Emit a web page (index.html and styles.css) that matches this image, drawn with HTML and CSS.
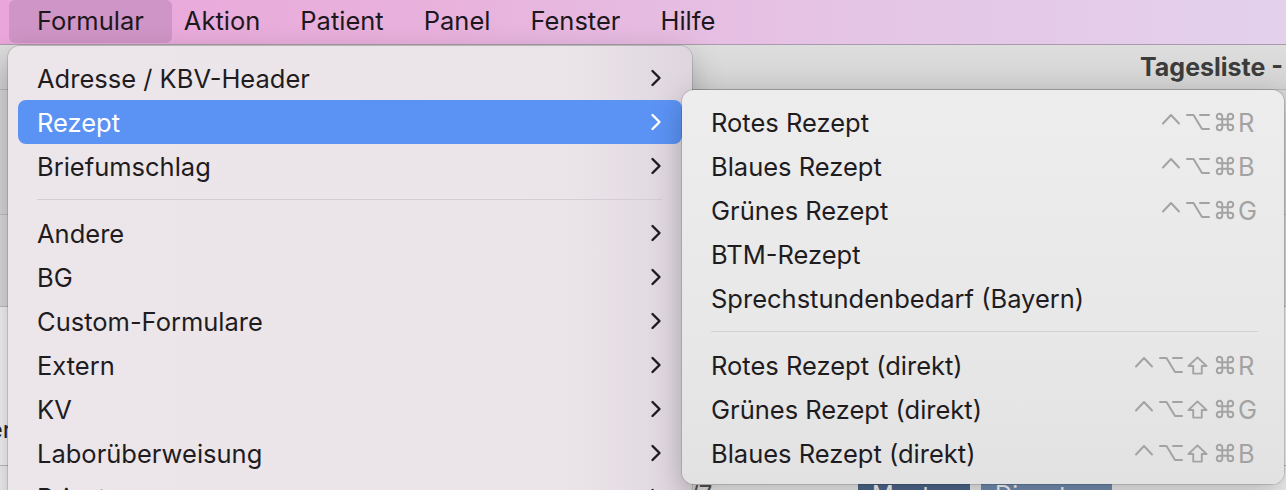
FILE: index.html
```html
<!DOCTYPE html>
<html lang="de">
<head>
    <meta charset="UTF-8">
    <title>Formular</title>
    <link rel="stylesheet" href="styles.css">
</head>
<body>
<div class="screen">
    <header class="menubar">
        <span class="menubar-item is-open">Formular</span>
        <span class="menubar-item">Aktion</span>
        <span class="menubar-item">Patient</span>
        <span class="menubar-item">Panel</span>
        <span class="menubar-item">Fenster</span>
        <span class="menubar-item">Hilfe</span>
    </header>

    <div class="window">
        <div class="titlebar">Tagesliste - Montag</div>
        <div class="window-body">
            <div class="pane pane-dark"></div>
            <div class="pane pane-mid"></div>
            <div class="pane pane-light"><span class="pane-text">Termine er</span></div>
            <div class="pane pane-foot"></div>
            <div class="daybar">
                <span class="daybar-count">/7</span>
                <span class="day-tab day-tab-dark">Montag</span>
                <span class="day-tab day-tab-light">Dienstag</span>
            </div>
        </div>
    </div>

    <!-- Formular menu -->
    <div class="menu menu-main">
        <div class="menu-row"><span>Adresse / KBV-Header</span><svg class="chevron" viewBox="0 0 12 20"><path d="M2.5 3 L9.5 10 L2.5 17"/></svg></div>
        <div class="menu-row is-active"><span>Rezept</span><svg class="chevron" viewBox="0 0 12 20"><path d="M2.5 3 L9.5 10 L2.5 17"/></svg></div>
        <div class="menu-row"><span>Briefumschlag</span><svg class="chevron" viewBox="0 0 12 20"><path d="M2.5 3 L9.5 10 L2.5 17"/></svg></div>
        <div class="menu-sep"></div>
        <div class="menu-row"><span>Andere</span><svg class="chevron" viewBox="0 0 12 20"><path d="M2.5 3 L9.5 10 L2.5 17"/></svg></div>
        <div class="menu-row"><span>BG</span><svg class="chevron" viewBox="0 0 12 20"><path d="M2.5 3 L9.5 10 L2.5 17"/></svg></div>
        <div class="menu-row"><span>Custom-Formulare</span><svg class="chevron" viewBox="0 0 12 20"><path d="M2.5 3 L9.5 10 L2.5 17"/></svg></div>
        <div class="menu-row"><span>Extern</span><svg class="chevron" viewBox="0 0 12 20"><path d="M2.5 3 L9.5 10 L2.5 17"/></svg></div>
        <div class="menu-row"><span>KV</span><svg class="chevron" viewBox="0 0 12 20"><path d="M2.5 3 L9.5 10 L2.5 17"/></svg></div>
        <div class="menu-row"><span>Laborüberweisung</span><svg class="chevron" viewBox="0 0 12 20"><path d="M2.5 3 L9.5 10 L2.5 17"/></svg></div>
        <div class="menu-row"><span>Privat</span><svg class="chevron" viewBox="0 0 12 20"><path d="M2.5 3 L9.5 10 L2.5 17"/></svg></div>
    </div>

    <!-- Rezept submenu -->
    <div class="menu menu-sub">
        <div class="menu-row"><span>Rotes Rezept</span>
            <span class="shortcut">
                <span class="key"><svg class="key-ctrl" viewBox="0 0 20 12"><path d="M2 10.5 L10 2 L18 10.5"/></svg></span>
                <span class="key"><svg class="key-opt" viewBox="0 0 24 18"><path d="M1 2 H7.5 L16 16 H23 M14 2 H23"/></svg></span>
                <span class="key"><svg class="key-cmd" viewBox="0 0 24 24"><path d="M18 3a3 3 0 0 0-3 3v12a3 3 0 0 0 3 3 3 3 0 0 0 3-3 3 3 0 0 0-3-3H6a3 3 0 0 0-3 3 3 3 0 0 0 3 3 3 3 0 0 0 3-3V6a3 3 0 0 0-3-3 3 3 0 0 0-3 3 3 3 0 0 0 3 3h12a3 3 0 0 0 3-3 3 3 0 0 0-3-3z"/></svg></span>
                <span class="key-letter">R</span>
            </span></div>
        <div class="menu-row"><span>Blaues Rezept</span>
            <span class="shortcut">
                <span class="key"><svg class="key-ctrl" viewBox="0 0 20 12"><path d="M2 10.5 L10 2 L18 10.5"/></svg></span>
                <span class="key"><svg class="key-opt" viewBox="0 0 24 18"><path d="M1 2 H7.5 L16 16 H23 M14 2 H23"/></svg></span>
                <span class="key"><svg class="key-cmd" viewBox="0 0 24 24"><path d="M18 3a3 3 0 0 0-3 3v12a3 3 0 0 0 3 3 3 3 0 0 0 3-3 3 3 0 0 0-3-3H6a3 3 0 0 0-3 3 3 3 0 0 0 3 3 3 3 0 0 0 3-3V6a3 3 0 0 0-3-3 3 3 0 0 0-3 3 3 3 0 0 0 3 3h12a3 3 0 0 0 3-3 3 3 0 0 0-3-3z"/></svg></span>
                <span class="key-letter">B</span>
            </span></div>
        <div class="menu-row"><span>Grünes Rezept</span>
            <span class="shortcut">
                <span class="key"><svg class="key-ctrl" viewBox="0 0 20 12"><path d="M2 10.5 L10 2 L18 10.5"/></svg></span>
                <span class="key"><svg class="key-opt" viewBox="0 0 24 18"><path d="M1 2 H7.5 L16 16 H23 M14 2 H23"/></svg></span>
                <span class="key"><svg class="key-cmd" viewBox="0 0 24 24"><path d="M18 3a3 3 0 0 0-3 3v12a3 3 0 0 0 3 3 3 3 0 0 0 3-3 3 3 0 0 0-3-3H6a3 3 0 0 0-3 3 3 3 0 0 0 3 3 3 3 0 0 0 3-3V6a3 3 0 0 0-3-3 3 3 0 0 0-3 3 3 3 0 0 0 3 3h12a3 3 0 0 0 3-3 3 3 0 0 0-3-3z"/></svg></span>
                <span class="key-letter">G</span>
            </span></div>
        <div class="menu-row"><span>BTM-Rezept</span></div>
        <div class="menu-row"><span>Sprechstundenbedarf (Bayern)</span></div>
        <div class="menu-sep"></div>
        <div class="menu-row"><span>Rotes Rezept (direkt)</span>
            <span class="shortcut">
                <span class="key"><svg class="key-ctrl" viewBox="0 0 20 12"><path d="M2 10.5 L10 2 L18 10.5"/></svg></span>
                <span class="key"><svg class="key-opt" viewBox="0 0 24 18"><path d="M1 2 H7.5 L16 16 H23 M14 2 H23"/></svg></span>
                <span class="key"><svg class="key-shift" viewBox="0 0 22 20"><path d="M11 1.5 L20.5 10.5 H15.5 V18.5 H6.5 V10.5 H1.5 Z"/></svg></span>
                <span class="key"><svg class="key-cmd" viewBox="0 0 24 24"><path d="M18 3a3 3 0 0 0-3 3v12a3 3 0 0 0 3 3 3 3 0 0 0 3-3 3 3 0 0 0-3-3H6a3 3 0 0 0-3 3 3 3 0 0 0 3 3 3 3 0 0 0 3-3V6a3 3 0 0 0-3-3 3 3 0 0 0-3 3 3 3 0 0 0 3 3h12a3 3 0 0 0 3-3 3 3 0 0 0-3-3z"/></svg></span>
                <span class="key-letter">R</span>
            </span></div>
        <div class="menu-row"><span>Grünes Rezept (direkt)</span>
            <span class="shortcut">
                <span class="key"><svg class="key-ctrl" viewBox="0 0 20 12"><path d="M2 10.5 L10 2 L18 10.5"/></svg></span>
                <span class="key"><svg class="key-opt" viewBox="0 0 24 18"><path d="M1 2 H7.5 L16 16 H23 M14 2 H23"/></svg></span>
                <span class="key"><svg class="key-shift" viewBox="0 0 22 20"><path d="M11 1.5 L20.5 10.5 H15.5 V18.5 H6.5 V10.5 H1.5 Z"/></svg></span>
                <span class="key"><svg class="key-cmd" viewBox="0 0 24 24"><path d="M18 3a3 3 0 0 0-3 3v12a3 3 0 0 0 3 3 3 3 0 0 0 3-3 3 3 0 0 0-3-3H6a3 3 0 0 0-3 3 3 3 0 0 0 3 3 3 3 0 0 0 3-3V6a3 3 0 0 0-3-3 3 3 0 0 0-3 3 3 3 0 0 0 3 3h12a3 3 0 0 0 3-3 3 3 0 0 0-3-3z"/></svg></span>
                <span class="key-letter">G</span>
            </span></div>
        <div class="menu-row"><span>Blaues Rezept (direkt)</span>
            <span class="shortcut">
                <span class="key"><svg class="key-ctrl" viewBox="0 0 20 12"><path d="M2 10.5 L10 2 L18 10.5"/></svg></span>
                <span class="key"><svg class="key-opt" viewBox="0 0 24 18"><path d="M1 2 H7.5 L16 16 H23 M14 2 H23"/></svg></span>
                <span class="key"><svg class="key-shift" viewBox="0 0 22 20"><path d="M11 1.5 L20.5 10.5 H15.5 V18.5 H6.5 V10.5 H1.5 Z"/></svg></span>
                <span class="key"><svg class="key-cmd" viewBox="0 0 24 24"><path d="M18 3a3 3 0 0 0-3 3v12a3 3 0 0 0 3 3 3 3 0 0 0 3-3 3 3 0 0 0-3-3H6a3 3 0 0 0-3 3 3 3 0 0 0 3 3 3 3 0 0 0 3-3V6a3 3 0 0 0-3-3 3 3 0 0 0-3 3 3 3 0 0 0 3 3h12a3 3 0 0 0 3-3 3 3 0 0 0-3-3z"/></svg></span>
                <span class="key-letter">B</span>
            </span></div>
    </div>
</div>
</body>
</html>
```

FILE: styles.css
```css
body {
    margin: 0;
    overflow: hidden;
    font-family: Inter, "Noto Sans", sans-serif;
}

.screen {
    position: relative;
    width: 1286px;
    height: 490px;
    overflow: hidden;
    background: #e8e8e8;
}

/* top menu bar */
.menubar {
    display: flex;
    height: 44px;
    padding-left: 17px;
    background: linear-gradient(90deg, #eaa6da 0%, #e8b2dd 35%, #e5c4e6 65%, #e3d1ec 100%);
    border-bottom: 1px solid #a99bab;
    font-size: 25.5px;
    color: #1c181c;
}

.menubar-item {
    padding: 0 20px;
    line-height: 42px;
}

.menubar-item.is-open {
    padding: 0 28px;
    margin: 0 -8px;
    background: #cf95c6;
    border-radius: 6px;
    height: 43px;
}

/* window behind the menus */
.window {
    display: flex;
    flex-direction: column;
    height: 470px;
    background: #f1f1f1;
}

.titlebar {
    flex: none;
    height: 44px;
    padding-left: 1140px;
    line-height: 44px;
    white-space: nowrap;
    font-size: 25px;
    font-weight: 700;
    color: #3c3c3c;
    background: linear-gradient(#dedede, #d2d2d2);
    border-bottom: 1px solid #b7b7b7;
}

.window-body {
    display: flex;
    flex-direction: column;
}

.pane {
    border-bottom: 1px solid #bdbdbd;
}

.pane-dark {
    height: 124px;
    background: #d6d6d6;
}

.pane-mid {
    height: 91px;
    background: #dadada;
}

.pane-light {
    height: 158px;
    background: #f3f3f3;
    font-size: 24px;
    color: #222;
}

.pane-text {
    display: block;
    margin: 108px 0 0 -110px;
}

.pane-foot {
    height: 14px;
    background: #f0f0f0;
    border-bottom: none;
}

.daybar {
    display: flex;
    align-items: flex-start;
    padding-left: 690px;
    font-size: 24px;
}

.daybar-count {
    width: 168px;
    color: #555;
}

.day-tab {
    padding: 0 14px;
    margin-right: 11px;
    color: #fff;
    border-radius: 3px;
    line-height: 30px;
}

.day-tab-dark {
    width: 84px;
    background: #4f6a8f;
}

.day-tab-light {
    width: 103px;
    background: #7591b5;
}

/* dropdown menus */
.menu {
    position: absolute;
    box-sizing: border-box;
    border-radius: 12px;
    font-size: 25.5px;
    color: #1f1c1f;
    box-shadow: 0 10px 30px rgba(0, 0, 0, 0.25), 0 0 0 1px rgba(0, 0, 0, 0.13);
}

.menu-main {
    left: 8px;
    top: 46px;
    width: 684px;
    padding: 10px 10px;
    background: linear-gradient(90deg, #ece6ea 0%, #ebe5e9 82%, #ded5de 100%);
}

.menu-sub {
    left: 682px;
    top: 90px;
    width: 602px;
    height: 394px;
    padding: 10px 10px 0;
    background: linear-gradient(180deg, #ededed 0%, #e8e8e8 60%, #e2e2e2 100%);
}

.menu-row {
    display: flex;
    align-items: center;
    justify-content: space-between;
    height: 44px;
    padding: 0 20px 0 19px;
    border-radius: 8px;
}

.menu-row.is-active {
    background: #5b93f5;
    color: #fff;
}

.chevron {
    width: 12px;
    height: 20px;
    fill: none;
    stroke: #1f1c1f;
    stroke-width: 2.4;
    stroke-linecap: round;
    stroke-linejoin: round;
}

.is-active .chevron {
    stroke: #fff;
}

.menu-sep {
    height: 1px;
    margin: 11px 20px 11px 19px;
    background: #d4cdd3;
}

.menu-sub .menu-row {
    padding: 0 18px 0 19px;
}

.menu-sub .menu-sep {
    margin: 11px 16px 11px 19px;
    background: #d3d3d3;
}

/* keyboard shortcuts */
.shortcut {
    display: flex;
    align-items: center;
    color: #a3a3a3;
}

.key {
    display: flex;
    justify-content: center;
    align-items: center;
    width: 27px;
    height: 20px;
}

.key svg {
    fill: none;
    stroke: #a3a3a3;
    stroke-width: 2;
    stroke-linecap: round;
    stroke-linejoin: round;
}

.key-ctrl {
    width: 20px;
    height: 12px;
    margin-bottom: 7px;
}

.key-opt {
    width: 24px;
    height: 18px;
}

.key-shift {
    width: 21px;
    height: 19px;
}

.key-cmd {
    width: 22px;
    height: 22px;
}

.key-cmd path {
    stroke-width: 2.1;
}

.key-letter {
    width: 18px;
}
```
